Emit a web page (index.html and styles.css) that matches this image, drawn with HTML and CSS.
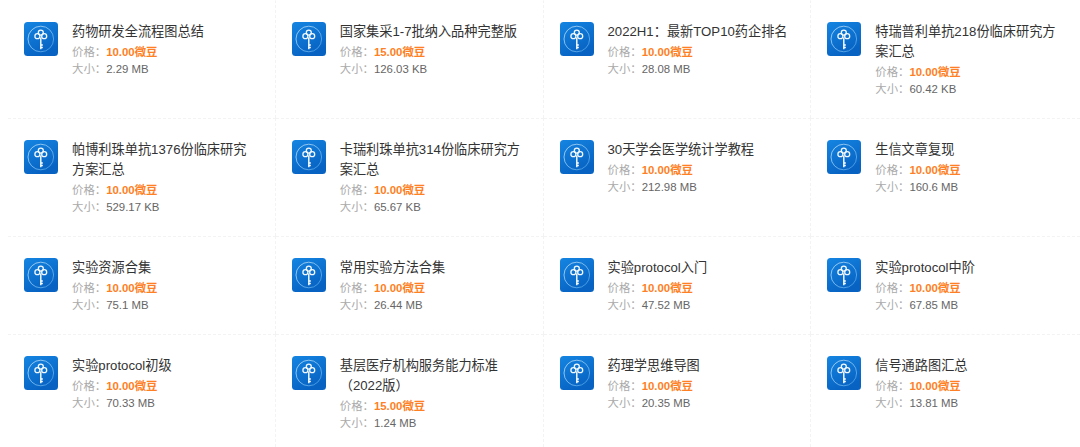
FILE: index.html
```html
<!DOCTYPE html>
<html lang="zh-CN">
<head>
<meta charset="utf-8">
<title>资料列表</title>
<link rel="stylesheet" href="styles.css">
</head>
<body>
<svg class="defs" width="0" height="0" aria-hidden="true">
  <defs>
    <linearGradient id="bg" x1="0" y1="0" x2="0.5" y2="1">
      <stop offset="0" stop-color="#1585e2"/>
      <stop offset="1" stop-color="#0762c2"/>
    </linearGradient>
    <linearGradient id="ring" x1="0" y1="0" x2="1" y2="1">
      <stop offset="0" stop-color="#a8d2f3"/>
      <stop offset="0.55" stop-color="#6fb3ea"/>
      <stop offset="1" stop-color="#2f8bdc"/>
    </linearGradient>
    <symbol id="logo" viewBox="0 0 34 34">
      <rect width="34" height="34" rx="3.5" fill="url(#bg)"/>
      <circle cx="16.8" cy="17" r="12.8" fill="none" stroke="url(#ring)" stroke-width="1"/>
      <g fill="none" stroke="#f4f9fe" stroke-width="1.3">
        <circle cx="16.8" cy="10.6" r="2.5"/>
        <circle cx="13.4" cy="14.2" r="2.5"/>
        <circle cx="20.2" cy="14.2" r="2.5"/>
      </g>
      <path d="M16.8 15.5v11.8M16.8 23h2M16.8 25.5h2" fill="none" stroke="#fff" stroke-width="1.4"/>
    </symbol>
  </defs>
</svg>
<main class="grid">
  <article class="item"><svg class="icon"><use href="#logo"/></svg><div class="info"><h3 class="title">药物研发全流程图总结</h3><p class="row"><span class="label">价格：</span><b class="price">10.00微豆</b></p><p class="row"><span class="label">大小：</span><span class="size">2.29 MB</span></p></div></article>
  <article class="item"><svg class="icon"><use href="#logo"/></svg><div class="info"><h3 class="title">国家集采1-7批纳入品种完整版</h3><p class="row"><span class="label">价格：</span><b class="price">15.00微豆</b></p><p class="row"><span class="label">大小：</span><span class="size">126.03 KB</span></p></div></article>
  <article class="item"><svg class="icon"><use href="#logo"/></svg><div class="info"><h3 class="title">2022H1：最新TOP10药企排名</h3><p class="row"><span class="label">价格：</span><b class="price">10.00微豆</b></p><p class="row"><span class="label">大小：</span><span class="size">28.08 MB</span></p></div></article>
  <article class="item"><svg class="icon"><use href="#logo"/></svg><div class="info"><h3 class="title">特瑞普利单抗218份临床研究方案汇总</h3><p class="row"><span class="label">价格：</span><b class="price">10.00微豆</b></p><p class="row"><span class="label">大小：</span><span class="size">60.42 KB</span></p></div></article>

  <article class="item"><svg class="icon"><use href="#logo"/></svg><div class="info"><h3 class="title">帕博利珠单抗1376份临床研究方案汇总</h3><p class="row"><span class="label">价格：</span><b class="price">10.00微豆</b></p><p class="row"><span class="label">大小：</span><span class="size">529.17 KB</span></p></div></article>
  <article class="item"><svg class="icon"><use href="#logo"/></svg><div class="info"><h3 class="title">卡瑞利珠单抗314份临床研究方案汇总</h3><p class="row"><span class="label">价格：</span><b class="price">10.00微豆</b></p><p class="row"><span class="label">大小：</span><span class="size">65.67 KB</span></p></div></article>
  <article class="item"><svg class="icon"><use href="#logo"/></svg><div class="info"><h3 class="title">30天学会医学统计学教程</h3><p class="row"><span class="label">价格：</span><b class="price">10.00微豆</b></p><p class="row"><span class="label">大小：</span><span class="size">212.98 MB</span></p></div></article>
  <article class="item"><svg class="icon"><use href="#logo"/></svg><div class="info"><h3 class="title">生信文章复现</h3><p class="row"><span class="label">价格：</span><b class="price">10.00微豆</b></p><p class="row"><span class="label">大小：</span><span class="size">160.6 MB</span></p></div></article>

  <article class="item"><svg class="icon"><use href="#logo"/></svg><div class="info"><h3 class="title">实验资源合集</h3><p class="row"><span class="label">价格：</span><b class="price">10.00微豆</b></p><p class="row"><span class="label">大小：</span><span class="size">75.1 MB</span></p></div></article>
  <article class="item"><svg class="icon"><use href="#logo"/></svg><div class="info"><h3 class="title">常用实验方法合集</h3><p class="row"><span class="label">价格：</span><b class="price">10.00微豆</b></p><p class="row"><span class="label">大小：</span><span class="size">26.44 MB</span></p></div></article>
  <article class="item"><svg class="icon"><use href="#logo"/></svg><div class="info"><h3 class="title">实验protocol入门</h3><p class="row"><span class="label">价格：</span><b class="price">10.00微豆</b></p><p class="row"><span class="label">大小：</span><span class="size">47.52 MB</span></p></div></article>
  <article class="item"><svg class="icon"><use href="#logo"/></svg><div class="info"><h3 class="title">实验protocol中阶</h3><p class="row"><span class="label">价格：</span><b class="price">10.00微豆</b></p><p class="row"><span class="label">大小：</span><span class="size">67.85 MB</span></p></div></article>

  <article class="item"><svg class="icon"><use href="#logo"/></svg><div class="info"><h3 class="title">实验protocol初级</h3><p class="row"><span class="label">价格：</span><b class="price">10.00微豆</b></p><p class="row"><span class="label">大小：</span><span class="size">70.33 MB</span></p></div></article>
  <article class="item"><svg class="icon"><use href="#logo"/></svg><div class="info"><h3 class="title">基层医疗机构服务能力标准（2022版）</h3><p class="row"><span class="label">价格：</span><b class="price">15.00微豆</b></p><p class="row"><span class="label">大小：</span><span class="size">1.24 MB</span></p></div></article>
  <article class="item"><svg class="icon"><use href="#logo"/></svg><div class="info"><h3 class="title">药理学思维导图</h3><p class="row"><span class="label">价格：</span><b class="price">10.00微豆</b></p><p class="row"><span class="label">大小：</span><span class="size">20.35 MB</span></p></div></article>
  <article class="item"><svg class="icon"><use href="#logo"/></svg><div class="info"><h3 class="title">信号通路图汇总</h3><p class="row"><span class="label">价格：</span><b class="price">10.00微豆</b></p><p class="row"><span class="label">大小：</span><span class="size">13.81 MB</span></p></div></article>
</main>
</body>
</html>
```

FILE: styles.css
```css
html, body {
  margin: 0;
  padding: 0;
  background: #fff;
  overflow: hidden;
}
body {
  height: 447px;
  font-family: "Liberation Sans", "Noto Sans CJK SC", sans-serif;
}
.defs {
  position: absolute;
}
.grid {
  display: grid;
  grid-template-columns: repeat(3, 267.75px) 1fr;
  margin-left: 8px;
}
.item {
  display: flex;
  align-items: flex-start;
  gap: 14px;
  padding: 21px 16px 20px;
  border-right: 1px dashed #f3f3f3;
  border-top: 1px dashed #f3f3f3;
  box-sizing: border-box;
}
.item:nth-child(-n+4) {
  border-top-color: transparent;
}
.item:nth-child(4n) {
  border-right: 0;
}
.icon {
  flex: none;
  width: 34px;
  height: 34px;
}
.info {
  min-width: 0;
  flex: 1;
}
.title {
  max-width: 184px;
  margin: 0 0 2px;
  font-size: 13.2px;
  font-weight: 400;
  line-height: 20px;
  color: #333;
}
.row {
  margin: 0;
  font-size: 11.4px;
  line-height: 17px;
  color: #666;
}
.label {
  color: #aaa;
}
.price {
  color: #ff7f24;
  font-weight: 700;
}
.size {
  color: #666;
}
```
